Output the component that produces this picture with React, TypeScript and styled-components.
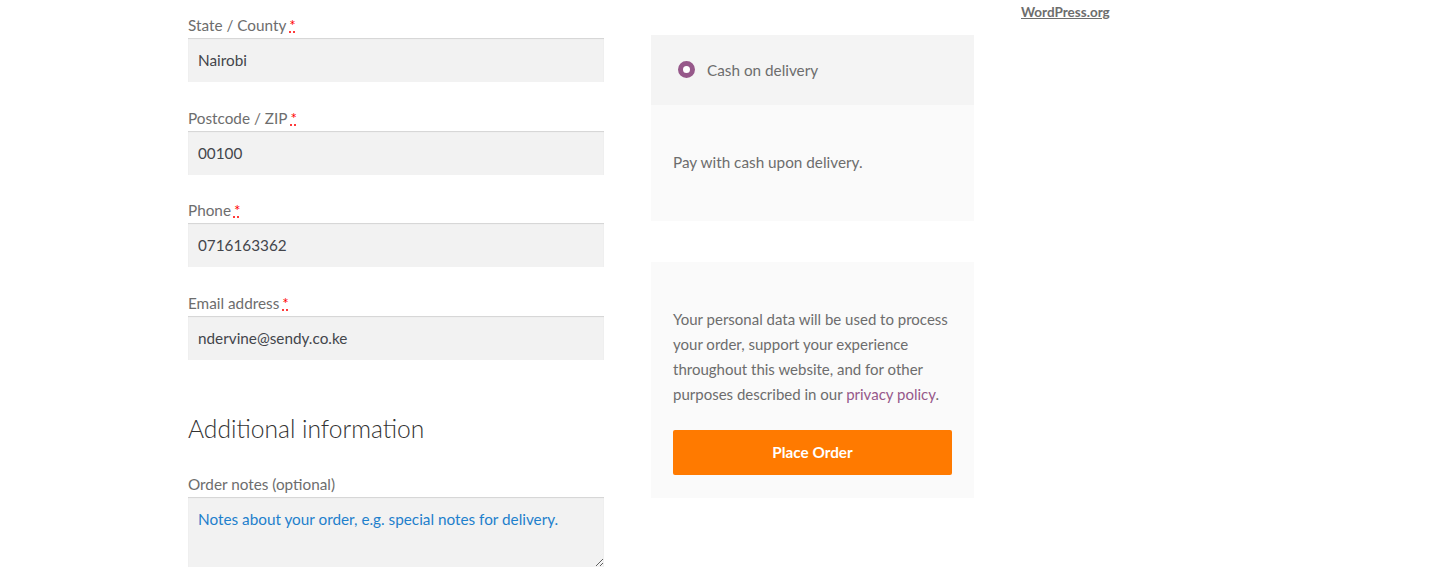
import React, { FC } from "react"
import styled, { createGlobalStyle } from "styled-components"

const GlobalStyle = createGlobalStyle`
  body {
    margin: 0;
    background: #ffffff;
    font-family: "Lato", "Liberation Sans", sans-serif;
    color: #6d6d6d;
  }
`

const Page = styled.div`
  display: grid;
  grid-template-columns: 416px 323px 200px;
  column-gap: 47px;
  padding-left: 188px;
  height: 580px;
  overflow: hidden;
`

const Billing = styled.div`
  padding-top: 12px;
`

const Field = styled.p`
  margin: 0 0 22.6px;
`

const Label = styled.label`
  display: block;
  font-size: 15.3px;
  line-height: 26px;
  color: #6d6d6d;
`

const Required = styled.abbr`
  color: #ff0000;
  text-decoration: underline dotted;
  margin-left: 3px;
`

const Input = styled.input`
  display: block;
  box-sizing: border-box;
  width: 100%;
  height: 44px;
  padding: 0 10px;
  border: 0;
  background: #f2f2f2;
  box-shadow: inset 0 1px 1px rgba(0, 0, 0, 0.125);
  font-family: inherit;
  font-size: 15.3px;
  color: #43454b;
  outline: none;
`

const Heading = styled.h3`
  margin: 50px 0 23px;
  font-size: 24.6px;
  line-height: 38px;
  font-weight: 300;
  color: #333333;
`

const Notes = styled.textarea`
  display: block;
  box-sizing: border-box;
  width: 100%;
  height: 70px;
  padding: 10px;
  border: 0;
  background: #f2f2f2;
  box-shadow: inset 0 1px 1px rgba(0, 0, 0, 0.125);
  font-family: inherit;
  font-size: 15.3px;
  line-height: 25px;
  outline: none;
  resize: vertical;

  &::placeholder {
    color: #1e80cc;
    opacity: 1;
  }
`

const Review = styled.div`
  padding-top: 35px;
`

const Methods = styled.ul`
  list-style: none;
  margin: 0;
  padding: 0;
`

const Method = styled.li`
  display: flex;
  align-items: center;
  gap: 12px;
  height: 70px;
  padding: 0 0 1px 27px;
  box-sizing: border-box;
  background: #f4f4f4;
  font-size: 15.3px;
  color: #6d6d6d;
`

const Radio = styled.span`
  box-sizing: border-box;
  width: 17px;
  height: 17px;
  border-radius: 50%;
  border: 5.5px solid #96588a;
  background: #ffffff;
`

const PaymentBox = styled.div`
  height: 116px;
  display: flex;
  align-items: center;
  padding: 0 22px 1px;
  box-sizing: border-box;
  background: #fafafa;
  font-size: 15.3px;
  line-height: 25px;
`

const PlaceOrder = styled.div`
  margin-top: 41px;
  padding: 45px 22px 23px;
  background: #fafafa;
`

const Terms = styled.p`
  margin: 0 0 22.5px;
  font-size: 15px;
  line-height: 25px;
  color: #6d6d6d;

  a {
    color: #96588a;
    text-decoration: none;
  }
`

const OrderButton = styled.button`
  display: block;
  width: 100%;
  height: 45px;
  border: 0;
  border-radius: 2px;
  background: #ff7a00;
  color: #ffffff;
  font-family: inherit;
  font-size: 15.3px;
  font-weight: 700;
`

const Sidebar = styled.div`
  padding-top: 1px;
`

const SideLink = styled.a`
  font-size: 13.5px;
  line-height: 20px;
  font-weight: 700;
  color: #6d6d6d;
  text-decoration: underline;
`

const fields = [
  { label: "State / County", value: "Nairobi" },
  { label: "Postcode / ZIP", value: "00100" },
  { label: "Phone", value: "0716163362" },
  { label: "Email address", value: "ndervine@sendy.co.ke" },
]

const App: FC = () => (
  <>
    <GlobalStyle />
    <Page>
      <Billing>
        { fields.map(f => (
          <Field key={ f.label }>
            <Label>{ f.label }<Required title="required">*</Required></Label>
            <Input defaultValue={ f.value } />
          </Field>
        )) }
        <Heading>Additional information</Heading>
        <Label>Order notes (optional)</Label>
        <Notes placeholder="Notes about your order, e.g. special notes for delivery." />
      </Billing>

      <Review>
        <Methods>
          <Method><Radio />Cash on delivery</Method>
        </Methods>
        <PaymentBox>Pay with cash upon delivery.</PaymentBox>
        <PlaceOrder>
          <Terms>
            Your personal data will be used to process your order, support your experience
            throughout this website, and for other purposes described in our <a href="#">privacy policy</a>.
          </Terms>
          <OrderButton>Place Order</OrderButton>
        </PlaceOrder>
      </Review>

      <Sidebar>
        <SideLink href="#">WordPress.org</SideLink>
      </Sidebar>
    </Page>
  </>
)

export default App
